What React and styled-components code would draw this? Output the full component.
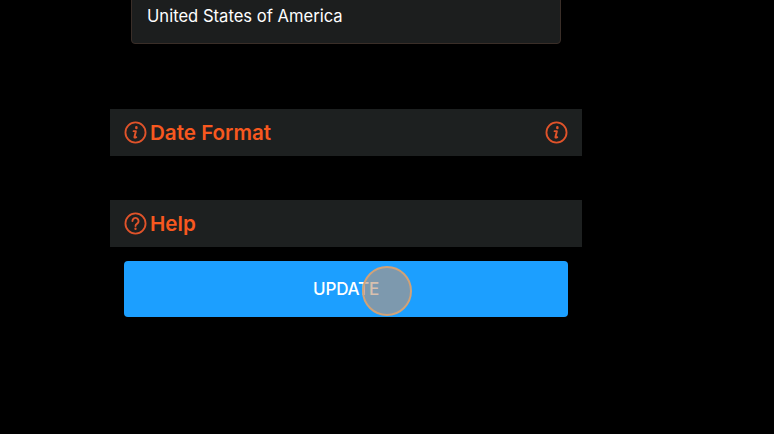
import React from "react";
import styled, { createGlobalStyle } from "styled-components";

const GlobalStyle = createGlobalStyle`
  html, body {
    margin: 0;
    padding: 0;
    background: #000;
    overflow: hidden;
  }
  body {
    font-family: Inter, "Liberation Sans", sans-serif;
  }
`;

const Page = styled.div`
  width: 774px;
  height: 434px;
  overflow: hidden;
  background: #000;
`;

const Column = styled.div`
  width: 472px;
  margin-left: 110px;
  display: flex;
  flex-direction: column;
`;

const CountryBox = styled.div`
  box-sizing: border-box;
  width: 430px;
  height: 60px;
  margin: -16px 0 65px 21px;
  padding: 3px 15px 0;
  display: flex;
  align-items: center;
  color: #fff;
  font-size: 16.6px;
  background: #1c1e1e;
  border: 1px solid #3a2e28;
  border-radius: 4px;
`;

const Section = styled.div`
  box-sizing: border-box;
  height: 47px;
  margin-bottom: ${(p) => p.$gap}px;
  padding: 0 14px;
  display: flex;
  align-items: center;
  justify-content: space-between;
  background: #1d2020;
`;

const TitleGroup = styled.div`
  display: flex;
  align-items: center;
  gap: 3px;
`;

const Title = styled.span`
  color: #f8581f;
  font-size: 20.6px;
  font-weight: 600;
`;

const IconSvg = styled.svg`
  width: 23px;
  height: 23px;
  display: block;
  color: #e0532a;
`;

const InfoIcon = () => (
  <IconSvg viewBox="0 0 24 24" fill="none" stroke="currentColor">
    <circle cx="12" cy="12" r="10.5" strokeWidth="1.9" />
    <path d="M12.9 6.6v.6" strokeWidth="2.6" strokeLinecap="round" />
    <path
      d="M10 10.6h2.4l-1.5 6.2c-.1.6.4.9 1.9.1"
      strokeWidth="2"
      strokeLinecap="round"
      strokeLinejoin="round"
    />
  </IconSvg>
);

const HelpIcon = () => (
  <IconSvg viewBox="0 0 24 24" fill="none" stroke="currentColor">
    <circle cx="12" cy="12" r="10.5" strokeWidth="1.9" />
    <path
      d="M8.8 9.4a3.2 3.2 0 1 1 4.9 2.7c-1.1.7-1.7 1.3-1.7 2.5"
      strokeWidth="2"
      strokeLinecap="round"
    />
    <path d="M12 17.4v.3" strokeWidth="2.4" strokeLinecap="round" />
  </IconSvg>
);

const ButtonWrap = styled.div`
  position: relative;
  padding: 0 14px;
  margin-top: -29px;
`;

const UpdateButton = styled.button`
  width: 100%;
  height: 56px;
  padding: 0;
  border: none;
  border-radius: 4px;
  background: #1c9fff;
  color: #fff;
  font-family: inherit;
  font-size: 17px;
  font-weight: 500;
  letter-spacing: -0.2px;
  text-transform: uppercase;
`;

const ClickRipple = styled.span`
  position: absolute;
  left: 252px;
  top: 5px;
  width: 50px;
  height: 50px;
  box-sizing: border-box;
  border-radius: 50%;
  border: 2px solid #d2a277;
  background: rgba(190, 150, 120, 0.6);
  pointer-events: none;
`;

export default function App() {
  return (
    <Page>
      <GlobalStyle />
      <Column>
        <CountryBox>United States of America</CountryBox>
        <Section $gap={43.5}>
          <TitleGroup>
            <InfoIcon />
            <Title>Date Format</Title>
          </TitleGroup>
          <InfoIcon />
        </Section>
        <Section $gap={43.5}>
          <TitleGroup>
            <HelpIcon />
            <Title>Help</Title>
          </TitleGroup>
        </Section>
        <ButtonWrap>
          <UpdateButton>Update</UpdateButton>
          <ClickRipple />
        </ButtonWrap>
      </Column>
    </Page>
  );
}
